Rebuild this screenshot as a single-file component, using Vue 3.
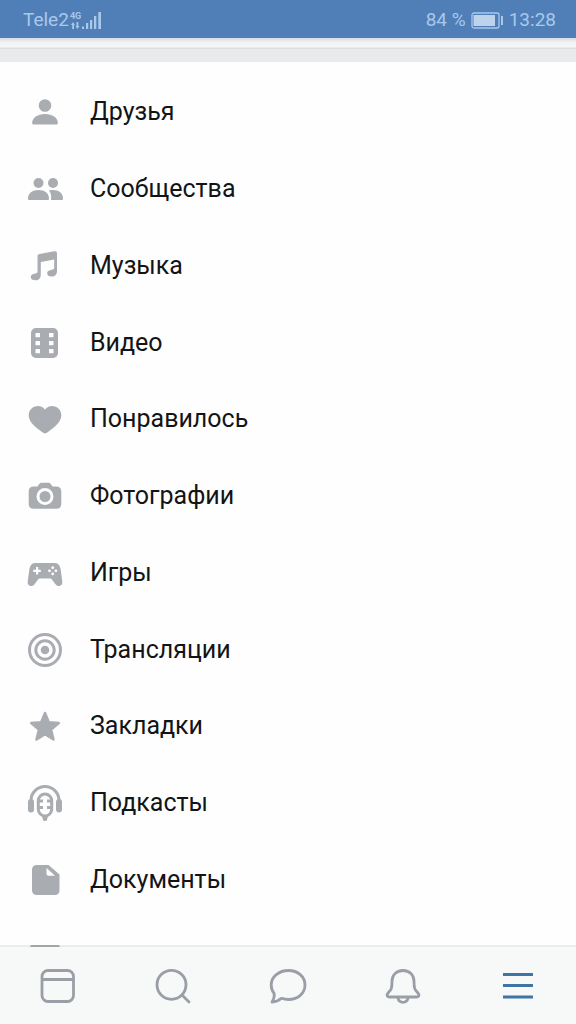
<script setup>
const items = [
  { id: 'friends', label: 'Друзья' },
  { id: 'groups', label: 'Сообщества' },
  { id: 'music', label: 'Музыка' },
  { id: 'video', label: 'Видео' },
  { id: 'liked', label: 'Понравилось' },
  { id: 'photos', label: 'Фотографии' },
  { id: 'games', label: 'Игры' },
  { id: 'live', label: 'Трансляции' },
  { id: 'bookmarks', label: 'Закладки' },
  { id: 'podcasts', label: 'Подкасты' },
  { id: 'docs', label: 'Документы' },
]
const tabs = [
  { id: 'feed', label: 'Новости' },
  { id: 'search', label: 'Поиск' },
  { id: 'messages', label: 'Сообщения' },
  { id: 'alerts', label: 'Уведомления' },
  { id: 'menu', label: 'Меню' },
]
</script>

<template>
  <div class="screen">
    <header class="status">
      <div class="carrier">
        <span>Tele2</span>
        <span class="network"><span>4G</span>
          <svg width="9" height="7" viewBox="0 0 9 7"><path d="M0 3 2 0 4 3H3V7H1.200V3zM4.500 4H5.500V0H7.300V4H8.500L6.400 7z" fill="currentColor" /></svg>
        </span>
        <svg class="signal" width="19" height="17" viewBox="0 0 19 17" fill="currentColor">
          <path d="M0 14.500h2V17H0zM4 11h2.200v6H4zM8 8h2.200v9H8zM12 4h2.300v13H12zM16.300 0H19v17h-2.700z" />
        </svg>
      </div>
      <div class="power">
        <span>84 %</span>
        <svg width="33" height="17" viewBox="0 0 33 17">
          <rect x="1" y="1" width="27" height="15" rx="2" fill="none" stroke="currentColor" stroke-width="1.300" />
          <rect x="2.500" y="3" width="21.500" height="11" fill="#bdd3ec" />
          <path d="M30 4h2v9h-2z" fill="currentColor" />
        </svg>
        <span>13:28</span>
      </div>
    </header>
    <div class="strip"></div>

    <main class="content">
      <ul class="list">
        <li v-for="item in items" :key="item.id">
          <a href="#" class="row">
            <svg class="icon" viewBox="0 0 40 40" aria-hidden="true">
              <template v-if="item.id === 'friends'">
                <circle cx="20" cy="13.500" r="6.300" />
                <path d="M7.200 31c0-5.500 5.500-9 12.800-9s12.800 3.500 12.800 9c0 1-.6 1.500-1.500 1.500H8.700c-.9 0-1.500-.5-1.500-1.500z" />
              </template>
              <template v-else-if="item.id === 'groups'">
                <circle cx="13.500" cy="14" r="5" />
                <circle cx="28" cy="14" r="5" />
                <path d="M3 29.500c0-5.400 4.300-8.500 10.500-8.500S24 24.100 24 29.500c0 1-.5 1.500-1.400 1.500H4.400C3.500 31 3 30.500 3 29.500zM24 21.500c1.200-.4 2.600-.5 4-.5 5.800 0 10 3.100 10 8.500 0 1-.5 1.500-1.400 1.500H26c.5-4.300 0-7.100-2-9.500z" />
              </template>
              <template v-else-if="item.id === 'music'">
                <path d="M12.500 10.500c0-1.500.7-2.300 2.200-2.600L29 5.300c2-.4 3 .4 3 2.200V25c0 3.500-2 5.500-5.500 5.500-2.700 0-4.300-1-4.300-3.200 0-3 3.300-3.300 5.600-3.800 1-.2 1.400-.7 1.400-1.700v-8.300L15.800 16v12.500c0 3.700-2 5.800-5.500 5.800-2.700 0-4.500-1-4.500-3.200 0-3 3.200-3.300 5.400-3.800.9-.2 1.300-.7 1.300-1.700z" />
              </template>
              <template v-else-if="item.id === 'video'">
                <rect x="6" y="5" width="27" height="30" rx="5" />
                <path class="cut" d="M10.500 10h4.500v4.300h-4.500zM24 10h4.500v4.300H24zM10.500 18h4.500v4.300h-4.500zM24 18h4.500v4.300H24zM10.500 26h4.500v4.300h-4.500zM24 26h4.500v4.300H24z" />
              </template>
              <path v-else-if="item.id === 'liked'" d="M20 10.500C22 8 24.500 7 27 7c5.300 0 9.300 4 9.300 9.200 0 7-6.500 11.300-13.300 16.900-2.300 1.900-3.700 1.900-6 0C10.200 27.500 3.700 23.200 3.700 16.200 3.700 11 7.700 7 13 7c2.500 0 5 1 7 3.500z" />
              <template v-else-if="item.id === 'photos'">
                <path d="M13.500 9c1-1.700 1.800-2.300 3.700-2.300h5.600c1.900 0 2.700.6 3.700 2.300l1 1.500H31c3.500 0 5.300 1.700 5.300 5v12.300c0 3.300-1.700 5-5 5H8.700c-3.300 0-5-1.700-5-5V15.500c0-3.300 1.800-5 5.300-5h3.500z" />
                <circle cx="20" cy="20.500" r="7" class="ring" />
              </template>
              <template v-else-if="item.id === 'games'">
                <path d="M10.500 10h19c3.500 0 5.200 2 6 5.500L37.200 27.500c.6 3.200-.8 5.500-3.200 5.500-1.700 0-2.700-.8-3.900-2.300L27.300 27c-.8-1-1.400-1.400-2.800-1.400h-9c-1.400 0-2 .4-2.800 1.400l-2.800 3.700C8.700 32.200 7.700 33 6 33c-2.400 0-3.800-2.300-3.200-5.500L4.500 15.500c.8-3.500 2.500-5.500 6-5.500z" />
                <path class="cut" d="M11 14h2.200v2.700h2.600v2.200h-2.600v2.600H11v-2.600H8.300v-2.200H11z" />
                <g class="cut"><circle cx="27.700" cy="14.700" r="1.400" /><circle cx="27.700" cy="20.900" r="1.400" /><circle cx="24.500" cy="17.800" r="1.400" /><circle cx="30.900" cy="17.800" r="1.400" /></g>
              </template>
              <template v-else-if="item.id === 'live'">
                <circle cx="20" cy="20" r="15.500" class="line" />
                <circle cx="20" cy="20" r="9.200" class="line" />
                <circle cx="20" cy="20" r="4.300" />
              </template>
              <path v-else-if="item.id === 'bookmarks'" stroke="#a9adb2" stroke-width="2.500" stroke-linejoin="round" d="M20 7l3.800 9.300 10 .8-7.700 6.500L28.500 33.500 20 28.200 11.500 33.500l2.400-9.900-7.700-6.500 10-.8z" />
              <template v-else-if="item.id === 'podcasts'">
                <path class="line" d="M6 20v-2.500a14 14 0 0 1 28 0V20" />
                <rect x="3" y="16" width="6" height="13.500" rx="3" />
                <rect x="31" y="16" width="6" height="13.500" rx="3" />
                <rect x="13.300" y="11" width="13.400" height="22" rx="6.700" class="line" />
                <path class="line" d="M14 18h4M14 24.500h4M26 18h-4M26 24.500h-4" />
                <path d="M17 33h6l-1 4c-.4 1.300-3.600 1.300-4 0z" />
              </template>
              <template v-else>
                <path d="M12 5h11.500L34.500 14.500v15.500c0 3.300-1.700 5-5 5H12c-3.300 0-5-1.700-5-5V10c0-3.300 1.700-5 5-5z" />
                <path class="cut" d="M21.500 8v5.500c0 1.500.7 2.200 2.200 2.200H30z" />
              </template>
            </svg>
            <span>{{ item.label }}</span>
          </a>
        </li>
      </ul>
      <div class="next" aria-hidden="true"><i></i></div>
    </main>

    <nav class="tabs">
      <button v-for="tab in tabs" :key="tab.id" type="button" :aria-label="tab.label" :class="{ active: tab.id === 'menu' }">
        <svg width="40" height="40" viewBox="0 0 40 40" fill="none" stroke="currentColor" stroke-width="2.800" stroke-linecap="round" stroke-linejoin="round">
          <path v-if="tab.id === 'feed'" d="M10 4.500h19.500a6 6 0 0 1 6 6v19a6 6 0 0 1-6 6H10a6 6 0 0 1-6-6v-19a6 6 0 0 1 6-6zM4 13.500h31.500" />
          <path v-else-if="tab.id === 'search'" d="M18.500 4.300a14.500 14.500 0 1 0 0 29 14.500 14.500 0 0 0 0-29zM29 29l7 7" />
          <path v-else-if="tab.id === 'messages'" d="M20.500 4.500c9.500 0 16.500 6.200 16.500 14.500s-7 14.500-16.500 14.500c-2.500 0-4.800-.4-7-1.200-2.700 2.300-5.500 3.500-9.500 3.700 1.800-2.500 2.500-5.200 2.200-8.300C4.200 25.200 3.200 22.300 3.200 19c0-8.300 7.800-14.500 17.300-14.500z" />
          <template v-else-if="tab.id === 'alerts'">
            <path d="M20 4.500c-6.800 0-11 4.700-11 10.800 0 7-.7 8.200-3.200 10.700-2.700 3-2 5 1 5h26.400c3 0 3.700-2 1-5-2.500-2.500-3.200-3.700-3.200-10.700C31 9.200 26.800 4.500 20 4.500z" />
            <path d="M15 32c.5 2.800 2.500 4.300 5 4.300s4.500-1.500 5-4.300" />
          </template>
          <path v-else stroke-linecap="butt" d="M5 8.500h30M5 19.500h30M5 31h30" />
        </svg>
      </button>
    </nav>
  </div>
</template>

<style>
body {
  margin: 0;
  background: #fefefe;
}
</style>

<style scoped>
.screen {
  display: flex;
  flex-direction: column;
  min-height: 100vh;
  background: #fefefe;
  color: #131415;
  font-family: Roboto, "Noto Sans", sans-serif;
}
.status {
  display: flex;
  align-items: center;
  justify-content: space-between;
  box-sizing: border-box;
  height: 38px;
  padding: 2px 20px 0 23px;
  background: #507fb8;
  color: #a9c8eb;
  font-size: 19px;
  line-height: 24px;
}
.carrier,
.power {
  display: flex;
  align-items: center;
}
.carrier {
  gap: 1px;
}
.power {
  gap: 5px;
}
.network {
  display: flex;
  flex-direction: column;
  align-items: center;
  gap: 1px;
  font-size: 9px;
  font-weight: 700;
  line-height: 9px;
}
.strip {
  box-sizing: border-box;
  height: 24px;
  border-bottom: 13px solid #e9eaec;
  background: linear-gradient(#d4dbe3, #eff1f3 4px, #f6f7f8 9px, #dcdee1 10px);
}
.content {
  display: flex;
  flex: 1;
  flex-direction: column;
  padding-top: 12px;
}
.list {
  display: flex;
  flex: 1;
  flex-direction: column;
  margin: 0;
  padding: 0;
  list-style: none;
}
.list li {
  display: flex;
  flex: 1;
}
.row {
  display: flex;
  flex: 1;
  align-items: center;
  gap: 25px;
  min-height: 56px;
  padding: 0 25px;
  color: inherit;
  font-size: 25px;
  line-height: 32px;
  text-decoration: none;
}
.icon {
  flex: none;
  width: 40px;
  height: 40px;
  fill: #a9adb2;
}
.icon .cut {
  fill: #fefefe;
}
.icon .ring {
  fill: none;
  stroke: #fefefe;
  stroke-width: 3;
}
.icon .line {
  fill: none;
  stroke: #a9adb2;
  stroke-width: 3;
}
.next {
  position: relative;
  display: flex;
  align-items: flex-end;
  height: 29px;
  margin-bottom: -2px;
  padding: 0 30px;
}
.next i {
  width: 30px;
  height: 2px;
  border-radius: 3px 3px 0 0;
  background: #a3a5a8;
}
.tabs {
  display: flex;
  border-top: 2px solid #ececed;
  background: #f7f8f8;
}
.tabs button {
  display: flex;
  flex: 1;
  align-items: center;
  justify-content: center;
  height: 77px;
  padding: 0;
  border: 0;
  background: none;
  color: #9a9ea6;
}
.tabs .active {
  color: #3f75a5;
}
</style>
